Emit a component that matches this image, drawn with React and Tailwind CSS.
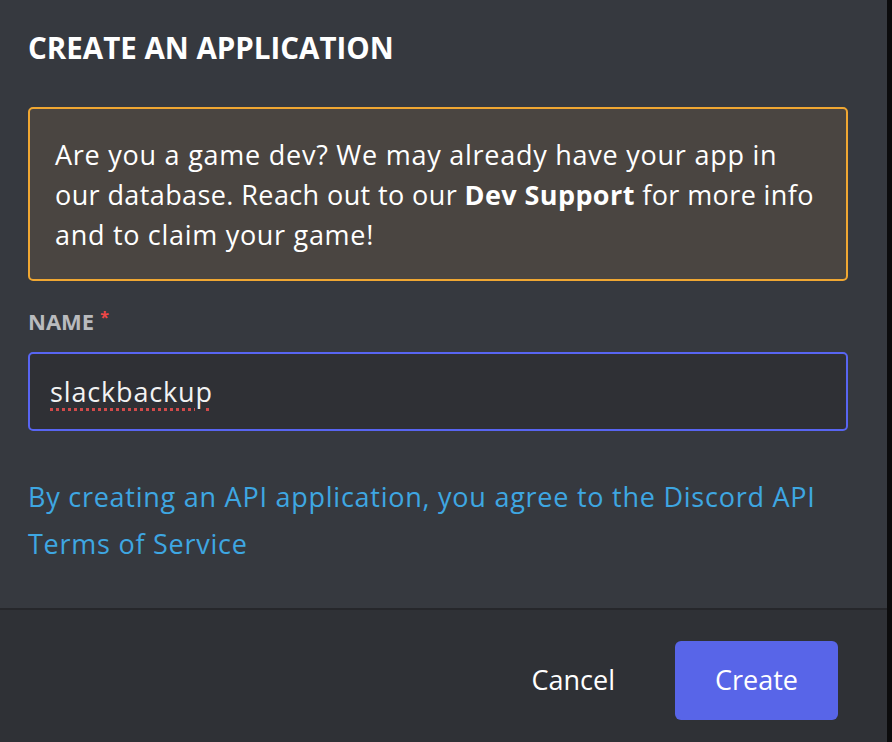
const font = { fontFamily: "'Open Sans', Lato, sans-serif" };

export default function App() {
  return (
    <div className="flex h-[742px] w-[892px] bg-[#0c0c0d]" style={font}>
      <div className="flex w-[887px] flex-col bg-[#36393f]">
        <div className="flex flex-1 flex-col px-[28px] pt-[30px]">
          <h1 className="text-[29.5px] leading-[36px] font-bold text-white">CREATE AN APPLICATION</h1>

          <div className="mt-[41px] w-[820px] rounded-[5px] border-2 border-[#f0a732] bg-[#4a4541] px-[25px] pt-[26px] pb-[24px] text-[27px] leading-[40px] whitespace-nowrap text-white">
            <span className="block tracking-[0.75px]">Are you a game dev? We may already have your app in</span>
            <span className="block tracking-[0.4px]">
              our database. Reach out to our <span className="font-bold">Dev Support</span> for more info
            </span>
            <span className="block tracking-[0.7px]">and to claim your game!</span>
          </div>

          <div className="mt-[26px] flex items-start gap-[6px] text-[22px] leading-[28px] font-bold text-[#b9bbbe]">
            NAME<span className="text-[16px] leading-[20px] text-[#f04747]">*</span>
          </div>

          <div className="mt-[17px] flex h-[79px] w-[820px] items-center rounded-[5px] border-2 border-[#5865f2] bg-[#2f3035] px-[20px]">
            <span className="text-[27px] leading-[32px] tracking-[0.85px] text-[#f3f3f3] underline decoration-[#d04a4a] decoration-dotted decoration-[3px] underline-offset-[6px]">
              slackbackup
            </span>
          </div>

          <p className="mt-[42px] text-[27px] leading-[47px] tracking-[0.75px] whitespace-nowrap text-[#3ea7e2]">
            <span className="block">By creating an API application, you agree to the Discord API</span>
            <span className="block">Terms of Service</span>
          </p>
        </div>

        <div className="flex h-[134px] items-center justify-end gap-[60px] border-t-2 border-[#26272b] bg-[#2f3136] pt-[8px] pr-[49px]">
          <button className="text-[27px] leading-[32px] text-white">Cancel</button>
          <button className="flex h-[79px] w-[163px] items-center justify-center rounded-[6px] bg-[#5865e8] text-[27px] leading-[32px] text-white">
            Create
          </button>
        </div>
      </div>
    </div>
  );
}
